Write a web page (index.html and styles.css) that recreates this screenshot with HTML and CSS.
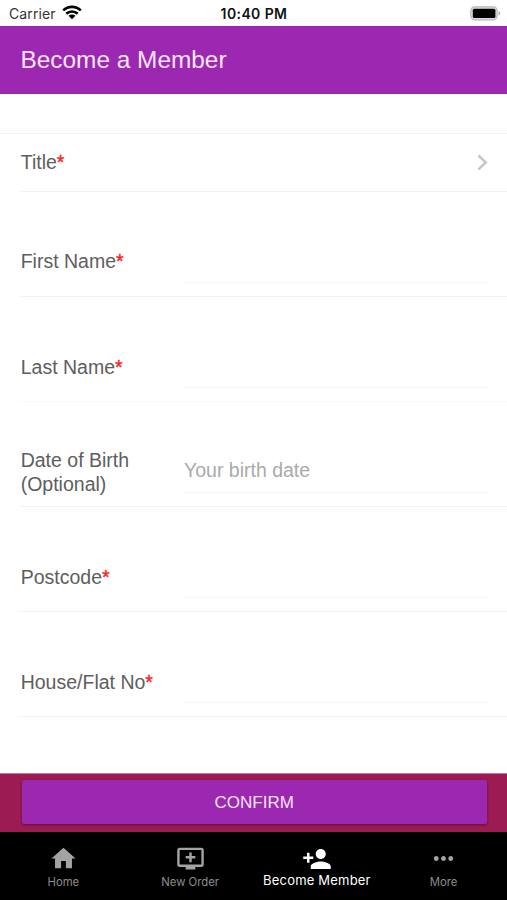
FILE: index.html
```html
<!DOCTYPE html>
<html lang="en">
<head>
<meta charset="utf-8">
<title>Become a Member</title>
<link rel="stylesheet" href="styles.css">
</head>
<body>
<div class="status">
  <div class="carrier"><span>Carrier</span>
    <svg class="wifi" width="20" height="15" viewBox="0 0 20 15"><g fill="none" stroke="#000" stroke-width="2.6"><path d="M1.2 5.4C6.2.7 13.8.7 18.8 5.4"/><path d="M4.3 8.7c3.2-3 8.2-3 11.4 0"/></g><path d="M10 14.2 6.5 10.8c2-1.8 5-1.8 7 0z"/></svg>
  </div>
  <div class="time">10:40 PM</div>
  <div class="power"><svg width="31" height="15" viewBox="0 0 31 15"><rect x=".8" y=".8" width="26.4" height="13" rx="4" fill="#ddd" stroke="#b9b9b9" stroke-width="1.2"/><rect x="2.8" y="2.7" width="22.6" height="9.2" rx="1.5"/><path d="M28.6 5c2 .6 2 4 0 4.6z" fill="#aaa"/></svg></div>
</div>
<header class="header">Become a Member</header>
<main class="form">
  <div class="spacer"></div>
  <div class="row select"><label>Title<b>*</b></label>
    <svg width="12" height="18" viewBox="0 0 12 18"><path d="m1.500 2.500 7.200 6.900-7.200 6.900" fill="none" stroke="#c4c4c4" stroke-width="2.500"/></svg>
  </div>
  <div class="row"><label>First Name<b>*</b></label><div class="field"></div></div>
  <div class="row faint"><label>Last Name<b>*</b></label><div class="field"></div></div>
  <div class="row double"><label>Date of Birth (Optional)</label><div class="field">Your birth date</div></div>
  <div class="row"><label>Postcode<b>*</b></label><div class="field"></div></div>
  <div class="row"><label>House/Flat No<b>*</b></label><div class="field"></div></div>
</main>
<footer class="footer"><button class="confirm">CONFIRM</button></footer>
<nav class="tabs">
  <a class="tab"><svg viewBox="0 0 24 24"><path d="M10 20v-6h4v6h5v-8h3L12 3 2 12h3v8z"/></svg><span>Home</span></a>
  <a class="tab"><svg viewBox="0 0 24 24"><path d="M21 3H3c-1.110 0-2 .89-2 2v12c0 1.100.89 2 2 2h5v2h8v-2h5c1.100 0 1.990-.9 1.990-2L23 5c0-1.110-.9-2-2-2zm0 14H3V5h18v12zm-5-7v2h-3v3h-2v-3H8v-2h3V7h2v3h3z"/></svg><span>New Order</span></a>
  <a class="tab active"><svg viewBox="0 0 24 24"><path d="M15 12c2.210 0 4-1.790 4-4s-1.790-4-4-4-4 1.790-4 4 1.790 4 4 4zm-9-2V7H4v3H1v2h3v3h2v-3h3v-2H6zm9 4c-2.670 0-8 1.340-8 4v2h16v-2c0-2.660-5.330-4-8-4z"/></svg><span>Become Member</span></a>
  <a class="tab"><svg viewBox="0 0 24 24"><path d="M6 10c-1.100 0-2 .9-2 2s.9 2 2 2 2-.9 2-2-.9-2-2-2zm12 0c-1.100 0-2 .9-2 2s.9 2 2 2 2-.9 2-2-.9-2-2-2zm-6 0c-1.100 0-2 .9-2 2s.9 2 2 2 2-.9 2-2-.9-2-2-2z"/></svg><span>More</span></a>
</nav>
</body>
</html>
```
FILE: styles.css
```css
* { box-sizing: border-box; }
body {
  margin: 0;
  height: 900px;
  display: flex;
  flex-direction: column;
  overflow: hidden;
  background: #fff;
  color: #5e5e5e;
  font-family: "Liberation Sans", Arial, sans-serif;
}
.status {
  height: 25.5px;
  flex: none;
  display: grid;
  grid-template-columns: 1fr auto 1fr;
  align-items: center;
  padding: 1px 6px 0 9px;
  color: #111;
  font-family: Inter, sans-serif;
  font-size: 14px;
}
.carrier { display: flex; align-items: center; gap: 6px; color: #333; letter-spacing: .1px; }
.wifi { margin-top: -1px; }
.time { font-weight: 600; font-size: 14px; letter-spacing: .4px; padding-right: 2px; }
.power { display: flex; justify-content: flex-end; }
.header {
  height: 68px;
  flex: none;
  padding: 0 20.5px;
  background: #9c27b0;
  color: #fbe6ff;
  font-size: 24.4px;
  line-height: 68px;
}
.form { flex: 1; }
.spacer { height: 40px; border-bottom: 1px solid #f2f2f2; }
.row {
  height: 105.2px;
  margin-left: 20px;
  padding: 36px 0 0 .7px;
  display: flex;
  align-items: center;
  border-bottom: 1px solid #f2f2f2;
  font-size: 19.5px;
  line-height: 24.5px;
}
.row label { width: 163.3px; padding-right: 30px; white-space: nowrap; }
.row.double label { white-space: normal; padding-top: 1px; }
.row b { color: #f22; font-weight: 400; -webkit-text-stroke: .4px #f22; }
.row.faint { border-color: #f9f9f9; }
.row.select {
  height: 58px;
  padding: 0 18px 0 .7px;
  justify-content: space-between;
}
.field {
  width: 304px;
  height: 44px;
  margin-top: -2px;
  padding-top: 9px;
  border-bottom: 1px solid #f5f5f5;
  color: #aaa;
}
.footer {
  height: 59px;
  flex: none;
  padding: 6px 20px 8px 21.5px;
  background: #9c1b53;
  border-top: 1px solid #c9739b;
}
.confirm {
  display: block;
  width: 100%;
  height: 44px;
  padding: 1px 0 0;
  border: 0;
  border-radius: 2px;
  background: #9c27b0;
  color: #fbe3ff;
  box-shadow: 0 1px 3px rgba(0, 0, 0, .4);
  font: 17px "Liberation Sans", Arial, sans-serif;
}
.tabs {
  height: 68px;
  flex: none;
  display: grid;
  grid-template-columns: repeat(4, 1fr);
  background: #000;
}
.tab {
  display: flex;
  flex-direction: column;
  align-items: center;
  padding-top: 11.5px;
  color: #8c8c8c;
  font: 11.3px/16px Inter, sans-serif;
}
.tab svg { width: 29px; height: 29px; fill: #a3a3a3; }
.tab span { margin-top: 1px; white-space: nowrap; }
.tab.active { color: #fff; font-size: 13px; letter-spacing: .2px; }
.tab.active svg { width: 30px; height: 30px; fill: #fff; }
.tab.active span { margin-top: -1.5px; }
```
